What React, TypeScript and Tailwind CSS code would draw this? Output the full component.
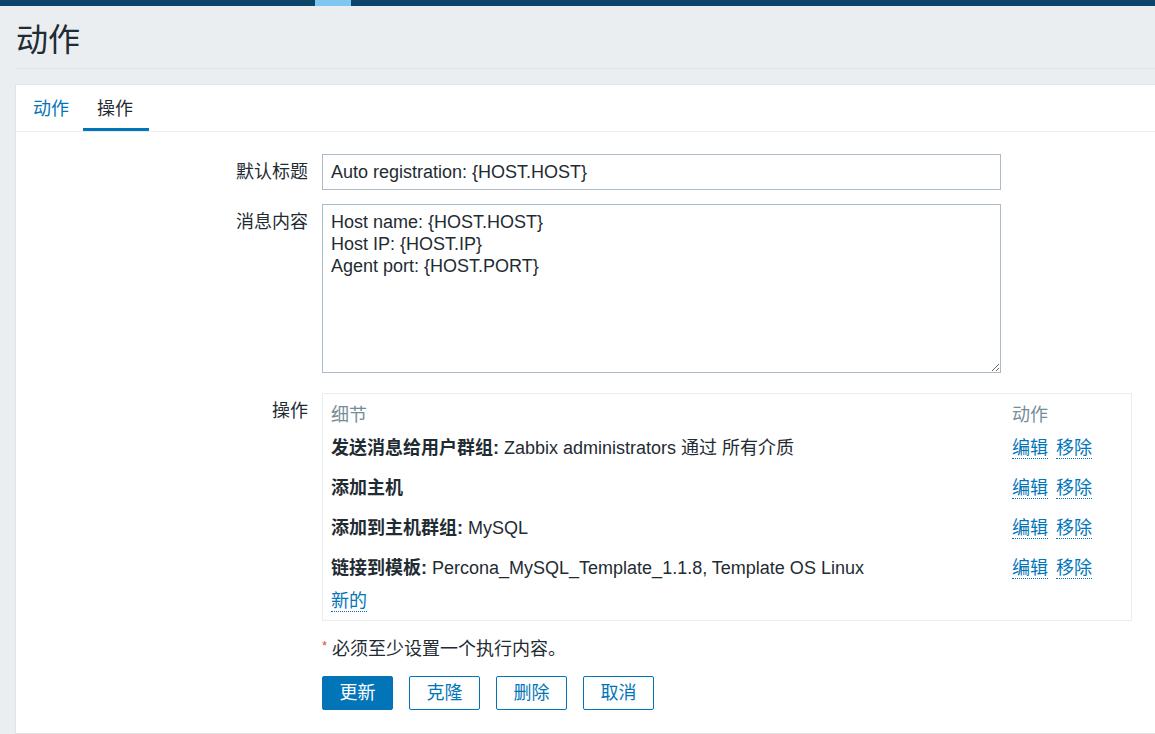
import React from 'react';

const font = "font-['Liberation_Sans','Noto_Sans_CJK_SC',sans-serif]";

const operations = [
  { title: '发送消息给用户群组:', detail: ' Zabbix administrators 通过 所有介质' },
  { title: '添加主机', detail: '' },
  { title: '添加到主机群组:', detail: ' MySQL' },
  { title: '链接到模板:', detail: ' Percona_MySQL_Template_1.1.8, Template OS Linux' },
];

function DottedLink({ children }: { children: React.ReactNode }) {
  return (
    <span className="text-[#0275b8] border-b border-dotted border-[#0275b8] leading-[20px] cursor-pointer">
      {children}
    </span>
  );
}

export default function App() {
  return (
    <div className={`${font} min-h-screen bg-[#ebeef1] text-[18px] text-[#1f2c33]`}>
      {/* top navigation strip */}
      <div className="flex h-[6px]">
        <div className="w-[315px] bg-[#0b466a]" />
        <div className="w-[36px] bg-[#7fc6f0]" />
        <div className="flex-1 bg-[#0b466a]" />
      </div>

      <div className="pl-[15px]">
        <div className="h-[63px] flex items-center border-b border-[#dde2e6] pl-[1px]">
          <h1 className="text-[32px] leading-none pt-[6px]">动作</h1>
        </div>

        <div className="mt-[15px] bg-white border border-[#dfe4e7] border-r-0 h-[650px]">
          {/* tabs */}
          <div className="flex h-[47px] border-b border-[#ebeef0] pl-[3px]">
            <div className="w-[64px] pl-[14px] flex items-center text-[#0275b8] pt-[2px]">动作</div>
            <div className="w-[66px] pl-[14px] flex items-center border-b-[3px] border-[#0275b8] pt-[5px]">操作</div>
          </div>

          {/* form */}
          <div className="pt-[22px]">
            <div className="flex">
              <div className="w-[292px] text-right pt-[7px] leading-[22px]">默认标题</div>
              <div className="ml-[14px]">
                <div className="w-[679px] h-[36px] border border-[#acbbc7] px-[8px] pt-[1px] flex items-center">
                  Auto registration: {'{HOST.HOST}'}
                </div>
              </div>
            </div>

            <div className="flex mt-[14px]">
              <div className="w-[292px] text-right pt-[7px] leading-[22px]">消息内容</div>
              <div className="ml-[14px]">
                <textarea
                  readOnly
                  className="block w-[679px] h-[169px] border border-[#acbbc7] px-[8px] pt-[6px] leading-[22px] text-[18px] text-[#1f2c33] outline-none"
                  defaultValue={'Host name: {HOST.HOST}\nHost IP: {HOST.IP}\nAgent port: {HOST.PORT}'}
                />
              </div>
            </div>

            <div className="flex mt-[20px]">
              <div className="w-[292px] text-right pt-[7px] leading-[22px]">操作</div>
              <div className="ml-[14px]">
                <div className="w-[810px] h-[228px] border border-[#ebeef0] px-[8px] pt-[10px]">
                  <div className="flex leading-[22px] text-[#768d99]">
                    <div className="flex-1">细节</div>
                    <div className="w-[111px]">动作</div>
                  </div>
                  {operations.map((op) => (
                    <div key={op.title} className="flex h-[40px] items-center pt-[4px]">
                      <div className="flex-1 leading-[22px]">
                        <span className="font-bold">{op.title}</span>
                        {op.detail}
                      </div>
                      <div className="w-[111px] flex gap-[8px]">
                        <DottedLink>编辑</DottedLink>
                        <DottedLink>移除</DottedLink>
                      </div>
                    </div>
                  ))}
                  <div className="pt-[2px]">
                    <DottedLink>新的</DottedLink>
                  </div>
                </div>

                <div className="mt-[17px] flex items-center leading-[22px]">
                  <span className="text-[#d64e4e] text-[13px] mr-[5px] -mt-[6px]">*</span>
                  <span>必须至少设置一个执行内容。</span>
                </div>

                <div className="mt-[16px] flex gap-[16px]">
                  <button className="w-[71px] h-[34px] rounded-[2px] bg-[#0275b8] border border-[#0275b8] text-white">更新</button>
                  <button className="w-[71px] h-[34px] rounded-[2px] bg-white border border-[#0275b8] text-[#0275b8]">克隆</button>
                  <button className="w-[71px] h-[34px] rounded-[2px] bg-white border border-[#0275b8] text-[#0275b8]">删除</button>
                  <button className="w-[71px] h-[34px] rounded-[2px] bg-white border border-[#0275b8] text-[#0275b8]">取消</button>
                </div>
              </div>
            </div>
          </div>
        </div>
      </div>
    </div>
  );
}
